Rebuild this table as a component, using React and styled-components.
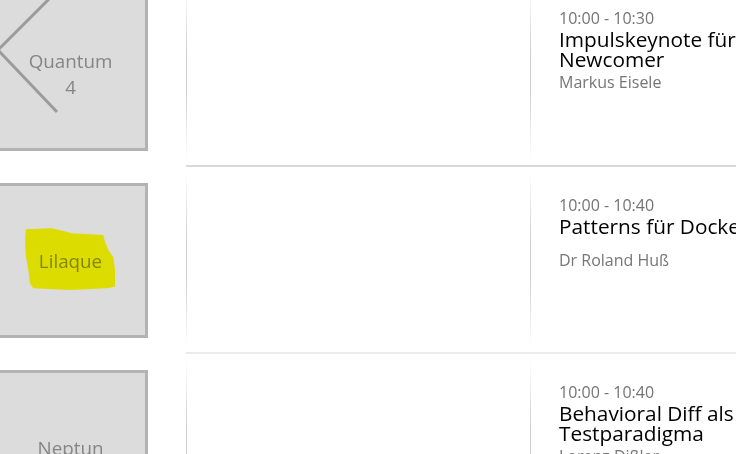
import React from "react";
import styled, { createGlobalStyle } from "styled-components";

const Global = createGlobalStyle`
  html, body {
    margin: 0;
    padding: 0;
    background: #ffffff;
    overflow: hidden;
    font-family: "Open Sans", "Noto Sans", sans-serif;
  }
`;

const Schedule = styled.div`
  margin-top: -20px;
  width: 800px;
`;

const Row = styled.div`
  display: grid;
  grid-template-columns: 186px 1fr;
  height: 187px;
`;

const RoomCell = styled.div`
  padding-top: 16px;
  margin-left: -7px;
`;

const Tile = styled.div`
  position: relative;
  width: 155px;
  height: 155px;
  box-sizing: border-box;
  border: 3px solid #b3b3b3;
  background: #dcdcdc;
  display: flex;
  align-items: center;
  justify-content: center;
  text-align: center;
  font-size: 18.8px;
  line-height: 26px;
  color: #858585;
  overflow: hidden;
`;

const Overlay = styled.svg`
  position: absolute;
  left: -3px;
  top: -3px;
  width: 155px;
  height: 155px;
  pointer-events: none;
  mix-blend-mode: ${(p) => (p.$multiply ? "multiply" : "normal")};
`;

const Session = styled.div`
  display: grid;
  grid-template-columns: 344px 270px;
  border-bottom: 2px solid ${(p) => p.$sep};
`;

const lineBg = `linear-gradient(to bottom, rgba(210,210,210,0) 3%, #cdcdcd 40%, #cdcdcd 60%, rgba(210,210,210,0) 97%) left top / 1px 100% no-repeat`;

const Track = styled.div`
  background: ${lineBg};
`;

const Talk = styled.div`
  background: ${lineBg};
  padding: 28px 0 0 29px;
  display: flex;
  flex-direction: column;
`;

const Time = styled.div`
  font-size: 16px;
  line-height: 20px;
  color: #747474;
`;

const Title = styled.div`
  font-size: 20.8px;
  line-height: 20px;
  margin-top: 1px;
  color: #000000;
`;

const Speaker = styled.div`
  font-size: 16px;
  line-height: 20px;
  color: #767676;
  margin-top: ${(p) => p.$gap}px;
`;

const Chevron = () => (
  <Overlay viewBox="0 0 155 155">
    <polyline
      points="61,-2 5,54 64,116"
      fill="none"
      stroke="#9b9b9b"
      strokeWidth="3"
    />
  </Overlay>
);

const Highlight = () => (
  <Overlay viewBox="0 0 155 155" $multiply>
    <path
      d="M32.7 46.3 L58.7 45.3 L73.7 48.7 L78.7 50.3 L110.3 52 L112 58.7 L115.3 67 L120.3 74.3 L122 87 L122 103.7 L113.7 105.3 L77 107 L40.3 105.3 L37 100.3 L35.3 87 L33 73.7 L32 60.3 Z"
      fill="#ffff00"
    />
  </Overlay>
);

const rows = [
  {
    room: ["Quantum", "4"],
    chevron: true,
    time: "10:00 - 10:30",
    title: "Impulskeynote für Newcomer",
    speaker: "Markus Eisele",
    gap: 3,
    sep: "#d9d9d9",
  },
  {
    room: ["Lilaque"],
    highlight: true,
    time: "10:00 - 10:40",
    title: "Patterns für Docker",
    speaker: "Dr Roland Huß",
    gap: 14,
    sep: "#ebebeb",
  },
  {
    room: ["Neptun"],
    time: "10:00 - 10:40",
    title: "Behavioral Diff als Testparadigma",
    speaker: "Lorenz Dißler",
    gap: 3,
    sep: "#ebebeb",
  },
];

export default function App() {
  return (
    <>
      <Global />
      <Schedule>
        {rows.map((r, i) => (
          <Row key={i}>
            <RoomCell>
              <Tile>
                <div>
                  {r.room.map((l, j) => (
                    <div key={j}>{l}</div>
                  ))}
                </div>
                {r.chevron && <Chevron />}
                {r.highlight && <Highlight />}
              </Tile>
            </RoomCell>
            <Session $sep={r.sep}>
              <Track />
              <Talk>
                <Time>{r.time}</Time>
                <Title>{r.title}</Title>
                <Speaker $gap={r.gap}>{r.speaker}</Speaker>
              </Talk>
            </Session>
          </Row>
        ))}
      </Schedule>
    </>
  );
}
